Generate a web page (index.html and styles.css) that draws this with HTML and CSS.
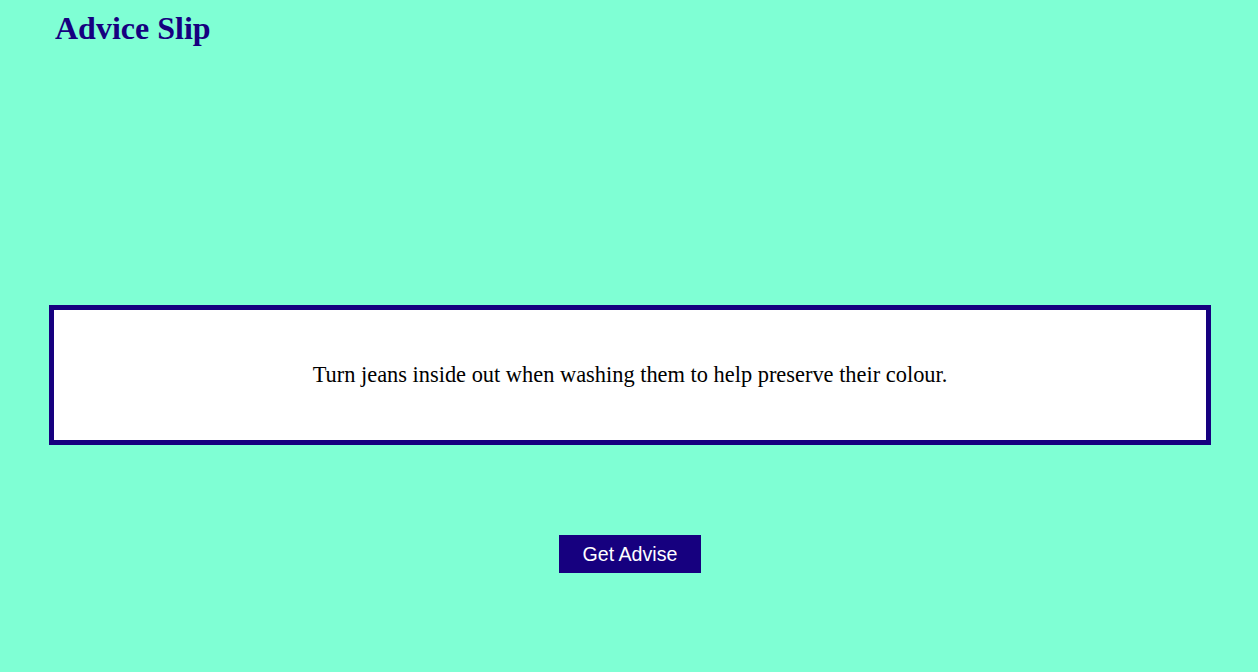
FILE: index.html
```html
<!DOCTYPE html>
<html>
<head>
<meta charset="utf-8">
<link rel="stylesheet" href="styles.css">
</head>
<body>
<div class="app">
  <h1 class="title">Advice Slip</h1>
  <div class="card">
    <p class="advice">Turn jeans inside out when washing them to help preserve their colour.</p>
  </div>
  <div class="actions">
    <button class="btn">Get Advise</button>
  </div>
</div>
</body>
</html>
```

FILE: styles.css
```css
html, body {
  margin: 0;
  padding: 0;
  background: #7fffd4;
}
body {
  font-family: "Liberation Serif", "Times New Roman", serif;
  height: 672px;
}
.app {
  padding: 0 47px 0 49px;
}
.title {
  margin: 0;
  padding: 10px 0 0 6px;
  font-size: 32px;
  line-height: 37px;
  font-weight: bold;
  color: #16007f;
}
.card {
  margin-top: 258px;
  height: 130px;
  border: 5px solid #16007f;
  background: #ffffff;
  display: flex;
  align-items: center;
  justify-content: center;
}
.advice {
  margin: 0;
  font-size: 22.4px;
  color: #000;
  text-align: center;
}
.actions {
  display: flex;
  justify-content: center;
  margin-top: 90px;
}
.btn {
  width: 142px;
  height: 38px;
  border: none;
  background: #16007f;
  color: #fff;
  font-family: "Liberation Sans", Arial, sans-serif;
  font-size: 19.6px;
  padding: 0;
  cursor: pointer;
}
```
